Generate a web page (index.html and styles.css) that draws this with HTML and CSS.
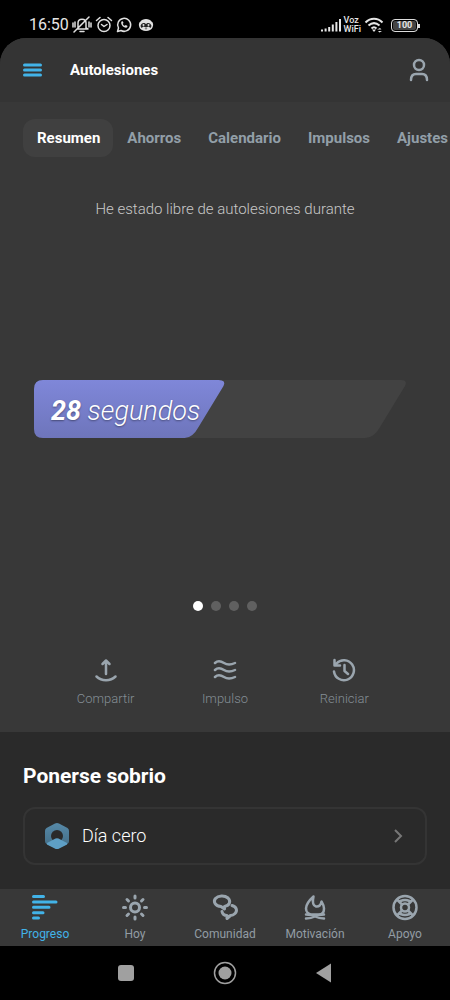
FILE: index.html
```
<!DOCTYPE html>
<html lang="es">
<head>
<meta charset="utf-8">
<meta name="viewport" content="width=device-width, initial-scale=1">
<title>Autolesiones</title>
<link rel="stylesheet" href="styles.css">
</head>
<body>
<div class="phone">
  <div class="status">
    <div class="status-left">
      <span class="clock">16:50</span>
      <svg width="20" height="18" viewBox="0 0 20 18" class="line-icon"><path d="M5 13h11M6 12V7c0-5 8-5 8 0v5l2 1M8 15.500h4M2 16L17 1M1 7v4M3 6v5M17 6v5M19 7v4"/></svg>
      <svg width="18" height="18" viewBox="0 0 18 18" class="line-icon alarm"><circle cx="9" cy="9.500" r="6"/><path d="M6.500 8.500L9 10.500l3-2M1.500 4.500l3.500-3M16.500 4.500l-3.500-3"/></svg>
      <svg width="16" height="18" viewBox="0 0 16 18" class="line-icon"><path d="M1.500 15.500l1-3.500a6.500 6.500 0 1 1 2.500 2.500z"/><path class="handset" d="M5.500 5.500c-1.500 3 2.500 7 5.500 6l.6-1.600-1.800-1-1 .9C7.600 9.300 7 8.500 6.700 7.700l.8-.8-.7-1.700z"/></svg>
      <svg class="face" width="16" height="18" viewBox="0 0 16 18"><path class="face-light" d="M2.500 5.500C4 2 12 2 13.500 5.500c2 1 2 4 1 6C13 16 3 16 1.500 11.500c-1-2-1-5 1-6z"/><path class="face-dark" d="M2.500 10C3 7.500 5 6.500 6.500 7L8 8l1.500-1c1.500-.5 3.500.5 4 3l-1 2-2-1.500L8 11.500l-2.500-1-2 1.500z"/><circle class="face-light" cx="5.500" cy="9" r="1"/><circle class="face-light" cx="10.500" cy="9" r="1"/><path class="face-dark" d="M6.500 12.500h3L8 13.500z"/></svg>
    </div>
    <div class="status-right">
      <svg width="20" height="14" viewBox="0 0 20 14" class="signal"><path d="M1 13.500v-2M4.600 13.500v-3M8.200 13.500V9M11.800 13.500V6.500M15.400 13.500V4M19 13.500V1"/></svg>
      <span class="carrier">Voz<br>WiFi</span>
      <svg width="20" height="16" viewBox="0 0 20 16" class="wifi"><path d="M1.500 5.500c5-5 12-5 17 0M4.500 8.500c3.500-3 7.500-3 11 0M7.500 11.500c1.500-1.500 3.500-1.500 5 0"/><path class="wifi-dot" d="M8 12.500h4l-2 2.500zM13 12.500h4.500l-1.500-1.500M18 14h-4l1.500 1.500"/></svg>
      <span class="battery">100</span>
    </div>
  </div>

  <div class="app">
    <header class="topbar">
      <button class="icon-button" aria-label="Menú"><svg width="19" height="14" viewBox="0 0 19 14" class="menu-icon"><path d="M1.500 2h16M1.500 7h16M1.500 12h16"/></svg></button>
      <h1 class="title">Autolesiones</h1>
      <button class="icon-button" aria-label="Perfil"><svg width="20" height="24" viewBox="0 0 20 24" class="stroke-icon"><circle cx="10" cy="7" r="5"/><path d="M2 22c0-4 2-6 5-6h6c3 0 5 2 5 6"/></svg></button>
    </header>

    <nav class="tabs" aria-label="Secciones">
      <button class="tab tab-active">Resumen</button>
      <button class="tab">Ahorros</button>
      <button class="tab">Calendario</button>
      <button class="tab">Impulsos</button>
      <button class="tab">Ajustes</button>
    </nav>

    <main class="summary">
      <p class="lead">He estado libre de autolesiones durante</p>
      <div class="counter">
        <svg class="counter-shape" viewBox="0 0 374 58" preserveAspectRatio="none" aria-hidden="true">
          <defs><linearGradient id="fill" x1="0" y1="0" x2="0" y2="1"><stop offset="0" stop-color="#7f87d9"/><stop offset="1" stop-color="#6e75bb"/></linearGradient></defs>
          <path fill="#424242" d="M9 0h359q7 0 4 6l-25 41q-6 11-15 11H9q-9 0-9-9V9q0-9 9-9z"/>
          <path fill="url(#fill)" d="M9 0h176q8 0 5 6l-25 41q-6 11-14 11H9q-9 0-9-9V9q0-9 9-9z"/>
        </svg>
        <p class="counter-text"><strong>28</strong> segundos</p>
      </div>
      <div class="dots"><span class="dot dot-on"></span><span class="dot"></span><span class="dot"></span><span class="dot"></span></div>
      <div class="actions">
        <button class="action"><svg width="24" height="24" viewBox="0 0 24 24" class="stroke-icon"><path d="M12 16V3M8.500 6L12 2.500 15.500 6M2.500 18.500c5 5 14 5 19 0"/></svg>Compartir</button>
        <button class="action"><svg width="24" height="24" viewBox="0 0 24 24" class="stroke-icon"><path d="M2 5c3-3 6-2 9 0s7 2 11 0M2 12c3-3 6-2 9 0s7 2 11 0M2 19c3-3 6-2 9 0s7 2 11 0"/></svg>Impulso</button>
        <button class="action"><svg width="24" height="24" viewBox="0 0 24 24" class="stroke-icon"><path d="M2 13.500A10 10 0 1 0 4.500 5.500M2.500 2v5.500H8M12.500 7v6l3.500 3"/></svg>Reiniciar</button>
      </div>
    </main>

    <section class="sober">
      <h2 class="sober-title">Ponerse sobrio</h2>
      <button class="card">
        <svg width="26" height="28" viewBox="0 0 26 28" aria-hidden="true">
          <defs><linearGradient id="hex" x1="0" y1="0" x2="0" y2="1"><stop offset="0" stop-color="#5689a8"/><stop offset="1" stop-color="#426b83"/></linearGradient></defs>
          <path fill="url(#hex)" d="M11 1.500q2-1 4 0l8.500 4.500q1.500 1 1.500 3v10q0 2-1.500 3L15 26.500q-2 1-4 0L2.500 22Q1 21 1 19V9q0-2 1.500-3z"/>
          <circle cx="13" cy="14" r="6" fill="#2a2a2a"/>
          <path fill="#5e9fc5" d="M3 21l8.500-4.500q1.500-.7 3 0L23 21v1.500l-8 4q-2 1-4 0l-8-4z"/>
        </svg>
        <span class="card-label">Día cero</span>
        <svg width="10" height="16" viewBox="0 0 10 16" class="chevron"><path d="M2 2l6 6-6 6"/></svg>
      </button>
    </section>

    <nav class="bottom" aria-label="Principal">
      <a class="item item-active" href="#progreso"><svg width="28" height="28" viewBox="0 0 28 28" class="bars-icon"><path d="M2.500 3.500h10M2.500 8.900h22.500M2.500 14.300h15.500M2.500 19.700h9.500M2.500 25h5"/></svg>Progreso</a>
      <a class="item" href="#hoy"><svg width="28" height="28" viewBox="0 0 28 28" class="stroke-icon heavy"><circle cx="14" cy="14.500" r="4.500"/><path d="M14 3v2M14 24v2M2.500 14.500h2M23.500 14.500h2M6 6.500l1.500 1.500M20.500 21l1.500 1.500M6 22.500l1.500-1.500M20.500 8l1.500-1.500"/></svg>Hoy</a>
      <a class="item" href="#comunidad"><svg width="28" height="28" viewBox="0 0 28 28" class="stroke-icon heavy"><path d="M13.500 16v-2.500c5.500-1 6.500-5.500 3.500-8.500-3.500-3-10-2.500-12.500.5s-.5 7.500 5.500 8z"/><path d="M21 12.500c5 1.500 5.500 5.500 3 8-1.500 1.500-3 2-4.500 2l-3.500 3v-3c-2.500 0-4.500-1.500-5-4"/></svg>Comunidad</a>
      <a class="item" href="#motivacion"><svg width="28" height="28" viewBox="0 0 28 28" class="stroke-icon"><path d="M12.500 3.500C7.500 8 5 11.500 5 15.500c0 4 3 6 5 6h8c3 0 5-2 5-6 0-3-1-4.500-2.500-7-.5 3.500-2.500 5.500-5.500 5-3.500-1-3.500-5.500-2.500-10z"/><path d="M5 25.500q5 0 9-2t9-2M5 21.500q5 0 9 2t9 2"/></svg>Motivación</a>
      <a class="item" href="#apoyo"><svg width="28" height="28" viewBox="0 0 28 28" class="stroke-icon"><circle cx="14" cy="14.500" r="11.500"/><circle cx="14" cy="14.500" r="4"/><path d="M11 11.500L6.500 7M17 11.500L21.500 7M11 17.500L6.500 22M17 17.500l4.500 4.500M9.500 8Q14 6 18.500 8M9.500 21Q14 23 18.500 21"/></svg>Apoyo</a>
    </nav>
  </div>

  <div class="system">
    <button class="sys" aria-label="Recientes"><svg width="24" height="24" viewBox="0 0 24 24"><rect x="4" y="4" width="16" height="16" rx="3" fill="#a0a0a0"/></svg></button>
    <button class="sys" aria-label="Inicio"><svg width="24" height="24" viewBox="0 0 24 24"><circle cx="12" cy="12" r="10.500" fill="none" stroke="#a0a0a0" stroke-width="1.500"/><circle cx="12" cy="12" r="6.500" fill="#a0a0a0"/></svg></button>
    <button class="sys" aria-label="Atrás"><svg width="24" height="24" viewBox="0 0 24 24"><path d="M4 12L19 2.500v19z" fill="#a0a0a0"/></svg></button>
  </div>
</div>
</body>
</html>
```
FILE: styles.css
```
* { box-sizing: border-box; }
body { margin: 0; background: #000; color: #fff; font-family: Roboto, "Liberation Sans", sans-serif; }
button { margin: 0; padding: 0; border: 0; background: none; color: inherit; font: inherit; cursor: pointer; }
h1, h2, p { margin: 0; }
svg { display: block; flex: none; }
.phone { display: flex; flex-direction: column; min-height: 100vh; overflow: hidden; }

.status { display: flex; justify-content: space-between; height: 38px; padding: 12px 32px 0 29px; color: #e6e6e6; }
.status-left, .status-right { display: flex; align-items: center; height: 26px; }
.status-left { gap: 3px; }
.status-right { gap: 3px; }
.clock { font-size: 16px; line-height: 20px; }
.line-icon { fill: none; stroke: #e0e0e0; stroke-width: 1.5; stroke-linecap: round; stroke-linejoin: round; }
.face { margin-left: 3px; }
.face-light { fill: #e0e0e0; }
.handset { fill: #e0e0e0; stroke: none; }
.face-dark { fill: #222; }
.signal { fill: none; stroke: #e6e6e6; stroke-width: 2; }
.carrier { font-size: 9px; line-height: 9px; font-weight: 500; }
.wifi { fill: none; stroke: #e6e6e6; stroke-width: 2; }
.wifi-dot { fill: #e6e6e6; stroke-width: 0; }
.battery { position: relative; width: 27px; margin-left: 4px; border: 1px solid #ddd; border-radius: 4px; background: #444; box-shadow: inset 0 0 0 1px #000; font-size: 9px; line-height: 11px; font-weight: 700; text-align: center; }
.battery::after { content: ""; position: absolute; right: -3px; top: 4px; width: 2px; height: 4px; background: #ddd; }

.app { display: flex; flex: 1; flex-direction: column; border-radius: 26px 26px 0 0; background: #383838; overflow: hidden; }
.topbar { display: flex; align-items: center; height: 64px; padding: 0 21px 0 23px; background: #343434; }
.icon-button { flex: none; }
.menu-icon { stroke: #42b3e8; stroke-width: 3; stroke-linecap: round; }
.title { flex: 1; padding-left: 28px; font-size: 15px; line-height: 20px; font-weight: 700; }
.stroke-icon { fill: none; stroke: #9aa5ae; stroke-width: 2.5; stroke-linecap: round; stroke-linejoin: round; }
.heavy { stroke-width: 3; }

.tabs { display: flex; padding: 17px 0 0 23px; overflow: hidden; }
.tab { flex: none; height: 38px; padding: 0 13px 0 14px; border-radius: 12px; color: #929fa8; font-size: 15px; line-height: 20px; font-weight: 700; }
.tab:last-child { padding-right: 0; }
.tab-active { background: #404040; color: #fff; }

.summary { display: flex; flex: 1; flex-direction: column; }
.lead { padding-top: 42px; color: #c8c8c8; font-size: 15px; line-height: 20px; font-weight: 300; text-align: center; }
.counter { display: grid; margin: auto 43px auto 34px; }
.counter-shape { grid-area: 1 / 1; width: 100%; height: 58px; }
.counter-text { grid-area: 1 / 1; align-self: center; padding: 4px 0 0 17px; font-size: 27px; line-height: 32px; font-style: italic; font-weight: 300; text-shadow: 0 1px 2px #0006; }
.counter-text strong { font-weight: 700; }
.dots { display: flex; justify-content: center; gap: 8px; padding-top: 2px; }
.dot { width: 10px; height: 10px; border-radius: 50%; background: #606060; }
.dot-on { background: #fff; }
.actions { display: grid; grid-template-columns: repeat(3, 1fr); padding: 47px 46px 25px; }
.action { display: flex; flex-direction: column; align-items: center; gap: 9px; color: #848e95; font-size: 13px; line-height: 16px; font-weight: 300; }

.sober { padding: 31px 23px 24px; background: #2a2a2a; }
.sober-title { font-size: 21px; line-height: 26px; font-weight: 700; }
.card { display: flex; align-items: center; width: 100%; height: 58px; margin-top: 18px; padding: 0 22px 0 19px; border: 2px solid #343434; border-radius: 12px; text-align: left; }
.card-label { flex: 1; padding-left: 12px; font-size: 18px; line-height: 24px; font-weight: 300; }
.chevron { fill: none; stroke: #777; stroke-width: 2; }

.bottom { display: grid; grid-template-columns: repeat(5, 1fr); height: 57px; padding-top: 4px; }
.item { display: flex; flex-direction: column; align-items: center; gap: 5px; color: #929ca4; font-size: 12px; line-height: 16px; text-decoration: none; }
.item-active { color: #42b3e8; }
.bars-icon { stroke: #42b3e8; stroke-width: 3; stroke-linecap: round; }

.system { display: flex; justify-content: center; gap: 75px; height: 54px; }
.sys { display: flex; align-items: center; }
```
